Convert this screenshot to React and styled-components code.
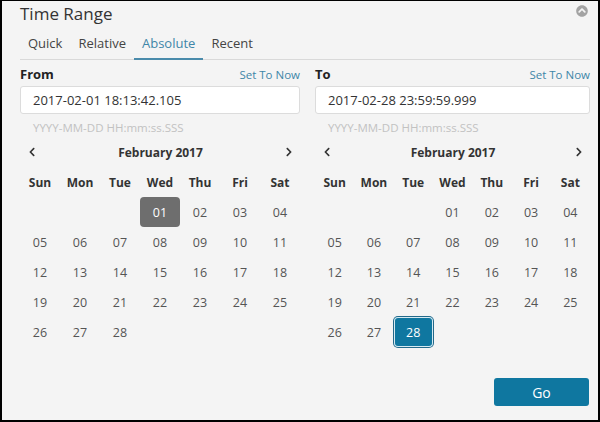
import styled, { createGlobalStyle } from "styled-components";
import { FaChevronCircleUp, FaChevronLeft, FaChevronRight } from "react-icons/fa";

const GlobalStyle = createGlobalStyle`
  html, body { margin: 0; padding: 0; background: #fff; }
  body { font-family: "Open Sans", "Liberation Sans", sans-serif; }
`;

const Panel = styled.div`
  position: relative;
  box-sizing: border-box;
  width: 600px;
  height: 422px;
  border: solid #000;
  border-width: 1px 2px 2px 2px;
  background: #f4f4f4;
  padding: 2px 8px 0 18px;
  color: #333;
  display: flex;
  flex-direction: column;
`;

const Title = styled.h2`
  margin: 0;
  font-size: 17px;
  font-weight: 400;
  line-height: 22px;
  color: #333;
`;

const Collapse = styled.button`
  position: absolute;
  top: 4px;
  right: 10px;
  padding: 0;
  border: 0;
  background: none;
  color: #a3a3a3;
  display: flex;
`;

const TabBar = styled.div`
  display: flex;
  margin-top: 5px;
  border-bottom: 1px solid #d9d9d9;
`;

const Tab = styled.div`
  padding: 4px 8px 6px;
  font-size: 13px;
  line-height: 18px;
  color: ${p => (p.$active ? "#3f86a8" : "#444")};
  border-bottom: 2px solid ${p => (p.$active ? "#4a8bab" : "transparent")};
  margin-bottom: -1px;
`;

const Columns = styled.div`
  display: grid;
  grid-template-columns: 280px 275px;
  column-gap: 15px;
  margin-top: 4px;
`;

const LabelRow = styled.div`
  display: flex;
  justify-content: space-between;
  align-items: baseline;
  line-height: 20px;
`;

const Label = styled.span`
  font-size: 13px;
  font-weight: 700;
  color: #222;
`;

const SetNow = styled.a`
  font-size: 11.5px;
  color: #3f86a8;
  text-decoration: none;
`;

const DateInput = styled.input`
  display: block;
  box-sizing: border-box;
  width: 100%;
  height: 28px;
  margin-top: 1px;
  padding: 0 12px;
  border: 1px solid #dcdcdc;
  border-radius: 3px;
  background: #fff;
  font-family: inherit;
  font-size: 13px;
  color: #333;
  outline: none;
`;

const Hint = styled.div`
  margin-top: 6px;
  padding-left: 13px;
  font-size: 11.5px;
  line-height: 16px;
  color: #c2c2c2;
`;

const NavRow = styled.div`
  margin-top: 1px;
  height: 30px;
  display: flex;
  align-items: center;
  justify-content: space-between;
  padding: 0 6px 0 7px;
  color: #333;
`;

const Month = styled.span`
  font-size: 12px;
  font-weight: 700;
`;

const DayGrid = styled.div`
  display: grid;
  grid-template-columns: repeat(7, 1fr);
  grid-auto-rows: 30px;
`;

const WeekDay = styled.div`
  display: flex;
  align-items: center;
  justify-content: center;
  font-size: 12px;
  font-weight: 700;
  color: #333;
`;

const tones = {
  gray: "background: #6e6e6e; color: #fff; border-radius: 4px;",
  blue: "background: #0f77a0; color: #fff; border-radius: 4px; box-shadow: inset 0 0 0 1px #d6eaf2, 0 0 0 1px #23698a;",
};

const Day = styled.div`
  display: flex;
  align-items: center;
  justify-content: center;
  font-size: 12.5px;
  color: #555;
  ${p => (p.$tone ? tones[p.$tone] : "")}
`;

const Footer = styled.div`
  margin-top: auto;
  display: flex;
  justify-content: flex-end;
  padding: 0 1px 14px 0;
`;

const GoButton = styled.button`
  width: 95px;
  height: 28px;
  border: 0;
  border-radius: 3px;
  background: #0f77a0;
  color: #fff;
  font-family: inherit;
  font-size: 14px;
`;

const weekDays = ["Sun", "Mon", "Tue", "Wed", "Thu", "Fri", "Sat"];
const pad = n => String(n).padStart(2, "0");

function Calendar({ selected, tone }) {
  const cells = [null, null, null];
  for (let d = 1; d <= 28; d++) cells.push(d);
  return (
    <>
      <NavRow>
        <FaChevronLeft size={10} />
        <Month>February 2017</Month>
        <FaChevronRight size={10} />
      </NavRow>
      <DayGrid>
        {weekDays.map(w => (
          <WeekDay key={w}>{w}</WeekDay>
        ))}
        {cells.map((d, i) => (
          <Day key={i} $tone={d === selected ? tone : null}>
            {d ? pad(d) : ""}
          </Day>
        ))}
      </DayGrid>
    </>
  );
}

function RangeSide({ label, value, selected, tone }) {
  return (
    <div>
      <LabelRow>
        <Label>{label}</Label>
        <SetNow href="#">Set To Now</SetNow>
      </LabelRow>
      <DateInput defaultValue={value} readOnly />
      <Hint>YYYY-MM-DD HH:mm:ss.SSS</Hint>
      <Calendar selected={selected} tone={tone} />
    </div>
  );
}

export default function App() {
  return (
    <>
      <GlobalStyle />
      <Panel>
        <Title>Time Range</Title>
        <Collapse>
          <FaChevronCircleUp size={12} />
        </Collapse>
        <TabBar>
          <Tab>Quick</Tab>
          <Tab>Relative</Tab>
          <Tab $active>Absolute</Tab>
          <Tab>Recent</Tab>
        </TabBar>
        <Columns>
          <RangeSide label="From" value="2017-02-01 18:13:42.105" selected={1} tone="gray" />
          <RangeSide label="To" value="2017-02-28 23:59:59.999" selected={28} tone="blue" />
        </Columns>
        <Footer>
          <GoButton>Go</GoButton>
        </Footer>
      </Panel>
    </>
  );
}
